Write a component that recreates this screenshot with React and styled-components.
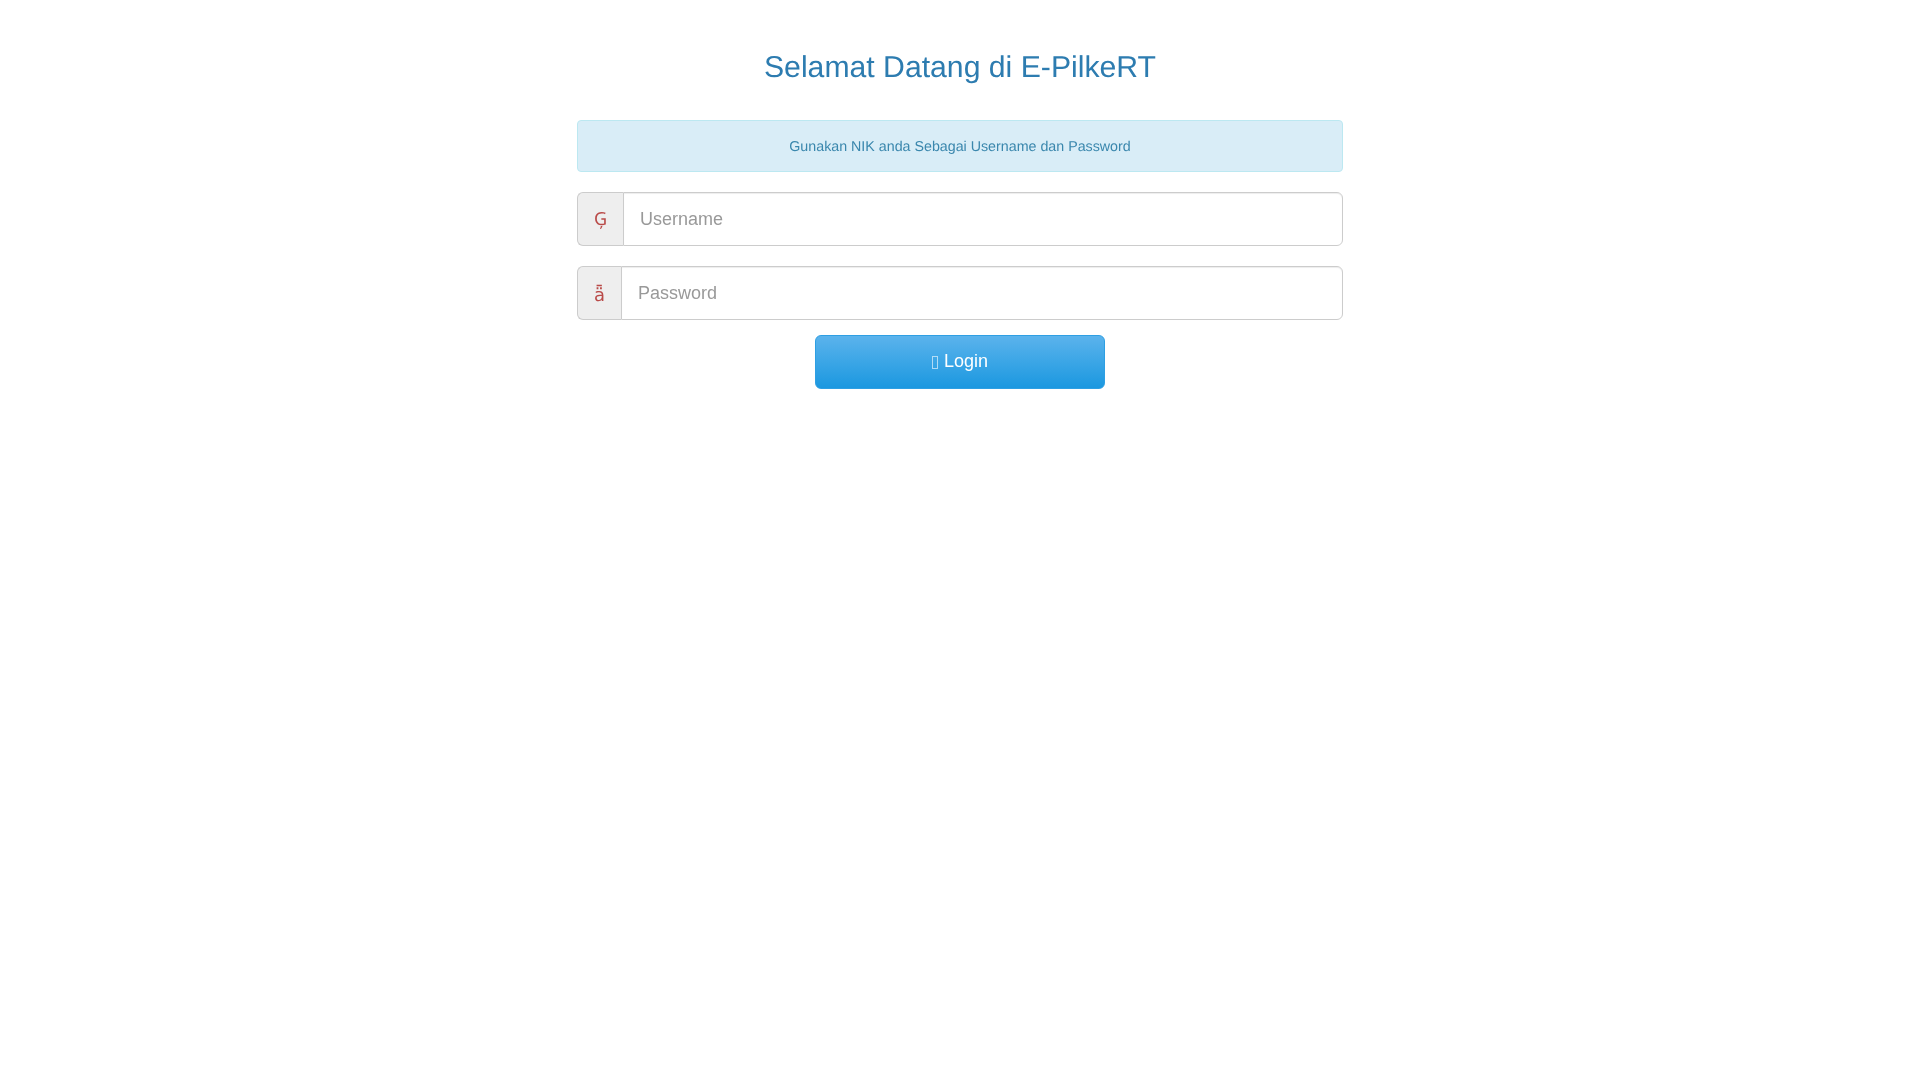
import React from 'react'
import styled, { createGlobalStyle } from 'styled-components'

const GlobalStyle = createGlobalStyle`
  * { box-sizing: border-box; }
  html, body { margin: 0; padding: 0; background: #fff; }
  body {
    font-family: "Liberation Sans", Arial, sans-serif;
    font-size: 14px;
    line-height: 1.42857143;
    color: #333;
    text-rendering: geometricPrecision;
  }
`

const Page = styled.div`
  width: 766px;
  margin: 0 auto;
  padding-top: 51px;
  will-change: transform;
`

const Title = styled.h3`
  margin: 0 0 36px;
  font-size: 30.2px;
  font-weight: 500;
  line-height: 33px;
  text-align: center;
  color: #2d7cb0;
`

const Notice = styled.div`
  padding: 16px 15px 14px;
  margin-bottom: 20px;
  border: 1px solid #bce8f1;
  border-radius: 4px;
  background-color: #d9edf7;
  color: #3a87ad;
  text-align: center;
  font-size: 14.25px;
  line-height: 20px;
`

const InputGroup = styled.div`
  display: flex;
  height: 54px;
  margin-bottom: ${({ $gap }) => $gap}px;
`

const Addon = styled.span`
  display: flex;
  align-items: center;
  justify-content: center;
  width: ${({ $width }) => $width}px;
  padding-top: ${({ $drop }) => $drop}px;
  border: 1px solid #ccc;
  border-right: 0;
  border-radius: 6px 0 0 6px;
  background-color: #eee;
  color: #b94a48;
  font-family: ${({ $font }) => $font}, sans-serif;
  font-size: 18px;
  line-height: 1;
`

const Field = styled.input`
  flex: 1;
  min-width: 0;
  padding: 10px 16px;
  border: 1px solid #ccc;
  border-radius: 0 6px 6px 0;
  box-shadow: inset 0 1px 1px rgba(0, 0, 0, 0.075);
  font-family: inherit;
  font-size: 18px;
  color: #555;
  outline: none;

  &::placeholder {
    color: #999;
    opacity: 1;
  }
`

const ButtonRow = styled.div`
  display: flex;
  justify-content: center;
`

const LoginButton = styled.button`
  width: 290px;
  height: 54px;
  padding: 0;
  border: 1px solid #2e9fe3;
  border-radius: 6px;
  background-image: linear-gradient(to bottom, #5bb3ec 0%, #1b98e0 100%);
  font-family: inherit;
  font-size: 18px;
  line-height: 1.33;
  color: #fff;
`

const MissingGlyph = styled.span`
  display: inline-block;
  width: 6px;
  height: 13px;
  margin-right: 6px;
  border: 1px solid rgba(255, 255, 255, 0.6);
  vertical-align: -2px;
`

export default function App() {
  return (
    <>
      <GlobalStyle />
      <Page>
        <Title>Selamat Datang di E-PilkeRT</Title>
        <Notice>Gunakan NIK anda Sebagai Username dan Password</Notice>
        <InputGroup $gap={20}>
          <Addon $width={46} $drop={0} $font='"Noto Sans"'>Ģ</Addon>
          <Field placeholder="Username" />
        </InputGroup>
        <InputGroup $gap={15}>
          <Addon $width={44} $drop={5} $font='"DejaVu Sans"'>ǟ</Addon>
          <Field placeholder="Password" />
        </InputGroup>
        <ButtonRow>
          <LoginButton>
            <MissingGlyph />
            Login
          </LoginButton>
        </ButtonRow>
      </Page>
    </>
  )
}
